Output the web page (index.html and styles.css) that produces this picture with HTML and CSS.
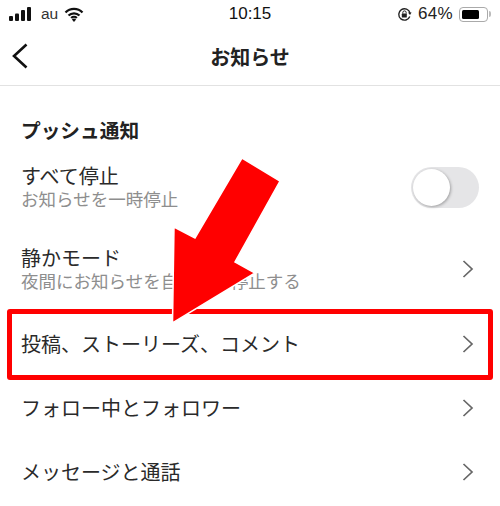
FILE: index.html
```html
<!DOCTYPE html>
<html lang="ja">
<head>
<meta charset="utf-8">
<title>お知らせ</title>
<link rel="stylesheet" href="styles.css">
</head>
<body>
<div class="screen">
  <div class="status">
    <div class="status-left">
      <svg class="signal" width="24" height="16" viewBox="0 0 24 16"><rect x="0" y="10" width="4" height="5" rx="1"/><rect x="6" y="7.5" width="4" height="7.5" rx="1"/><rect x="12" y="4" width="4" height="11" rx="1"/><rect x="18" y="1" width="4" height="14" rx="1"/></svg>
      <span class="carrier">au</span>
      <svg class="wifi" width="20" height="15" viewBox="0 0 20 15"><path d="M1.5 5.5a12 12 0 0 1 17 0M4.5 8.5a8 8 0 0 1 11 0M7.2 11a4 4 0 0 1 5.6 0" fill="none" stroke="#111" stroke-width="2.3"/><path d="M10 15l-2.1-2.4a3 3 0 0 1 4.2 0z" fill="#111"/></svg>
    </div>
    <span class="time">10:15</span>
    <div class="status-right">
      <svg class="lock" width="15" height="15" viewBox="0 0 15 15"><path d="M12.8 9.5A5.7 5.7 0 1 1 13 6" fill="none" stroke="#222" stroke-width="1.4"/><path d="M11 5.5h3.6L13 8z" fill="#222"/><rect x="4.8" y="6.6" width="5" height="4" rx=".6" fill="#222"/><path d="M5.8 6.6V5.6a1.7 1.7 0 0 1 3.4 0v1" fill="none" stroke="#222" stroke-width="1"/></svg>
      <span class="pct">64%</span>
      <div class="battery"><div class="battery-fill"></div></div>
      <div class="battery-cap"></div>
    </div>
  </div>
  <header class="nav">
    <svg class="back" width="18" height="26" viewBox="0 0 18 26"><path d="M15.5 1.5L3 13l12.5 11.5" fill="none" stroke="#111" stroke-width="2.6"/></svg>
    <h1 class="nav-title">お知らせ</h1>
  </header>
  <main class="content">
    <h2 class="section-title">プッシュ通知</h2>
    <div class="row row-toggle">
      <div class="row-text">
        <div class="row-label">すべて停止</div>
        <div class="row-sub">お知らせを一時停止</div>
      </div>
      <div class="toggle"><div class="knob"></div></div>
    </div>
    <div class="row row-double">
      <div class="row-text">
        <div class="row-label">静かモード</div>
        <div class="row-sub">夜間にお知らせを自動一時停止する</div>
      </div>
      <svg class="chev" width="12" height="20" viewBox="0 0 12 20"><path d="M1.5 2l8.5 8-8.5 8" fill="none" stroke="#666" stroke-width="1.7"/></svg>
    </div>
    <div class="row row-single row-first">
      <div class="row-label">投稿、ストーリーズ、コメント</div>
      <svg class="chev" width="12" height="20" viewBox="0 0 12 20"><path d="M1.5 2l8.5 8-8.5 8" fill="none" stroke="#666" stroke-width="1.7"/></svg>
    </div>
    <div class="row row-single">
      <div class="row-label">フォロー中とフォロワー</div>
      <svg class="chev" width="12" height="20" viewBox="0 0 12 20"><path d="M1.5 2l8.5 8-8.5 8" fill="none" stroke="#666" stroke-width="1.7"/></svg>
    </div>
    <div class="row row-single">
      <div class="row-label">メッセージと通話</div>
      <svg class="chev" width="12" height="20" viewBox="0 0 12 20"><path d="M1.5 2l8.5 8-8.5 8" fill="none" stroke="#666" stroke-width="1.7"/></svg>
    </div>
  </main>
  <div class="highlight"></div>
  <svg class="arrow" width="500" height="506" viewBox="0 0 500 506"><polygon points="242,158 280,181 235,262 255,273 172.5,323 174,227 195,238" fill="#f00" stroke="#fff" stroke-width="1.5"/></svg>
</div>
</body>
</html>
```
FILE: styles.css
```css
* { box-sizing: border-box; }
html, body { margin: 0; padding: 0; background: #fff; }
body { font-family: "Noto Sans CJK JP", "Noto Sans", sans-serif; color: #222; }
.screen { position: relative; width: 500px; height: 506px; overflow: hidden; background: #fff; }

.status { height: 28px; display: flex; align-items: center; justify-content: space-between; padding: 0 9px; position: relative; font-family: "Liberation Sans", sans-serif; }
.status-left { display: flex; align-items: center; width: 122px; }
.signal { fill: #111; margin-right: 8px; }
.carrier { font-size: 15.5px; color: #333; margin-right: 6px; }
.time { font-size: 17px; color: #111; }
.status-right { display: flex; align-items: center; width: 122px; justify-content: flex-end; }
.lock { margin-right: 6px; }
.pct { font-size: 17px; color: #222; margin-right: 6px; letter-spacing: .3px; }
.battery { width: 29px; height: 15px; border: 1.5px solid #aaa; border-radius: 4px; padding: 2px; }
.battery-fill { width: 17px; height: 100%; background: #000; border-radius: 1.5px; }
.battery-cap { width: 2px; height: 6px; background: #bbb; border-radius: 0 2px 2px 0; margin-left: 1px; }

.nav { height: 58px; display: flex; align-items: center; justify-content: center; position: relative; border-bottom: 1px solid #e2e2e2; }
.back { position: absolute; left: 11px; top: 15px; }
.nav-title { margin: 0; font-size: 20px; font-weight: 700; color: #222; }

.content { display: flex; flex-direction: column; padding: 0 22px 0 21px; }
.section-title { margin: 31px 0 0; font-size: 19.7px; line-height: 26px; font-weight: 700; color: #222; }
.row { display: flex; align-items: center; justify-content: space-between; }
.row-toggle { height: 58px; margin-top: 15px; }
.row-double { height: 64px; margin-top: 21px; padding-right: 4px; }
.row-first { margin-top: 11px; }
.row-single { height: 64px; padding-right: 4px; }
.row-label { font-size: 20px; line-height: 24px; color: #2a2a2a; white-space: nowrap; }
.row-sub { font-size: 17.5px; line-height: 22px; color: #8e8e8e; white-space: nowrap; }
.toggle { width: 68px; height: 41px; border-radius: 21px; background: #e5e5e7; padding: 2px; margin-right: -1px; }
.knob { width: 37px; height: 37px; border-radius: 50%; background: #fff; box-shadow: 1px 1px 3px rgba(0,0,0,.3); }

.highlight { position: absolute; left: 7px; top: 309px; width: 486px; height: 71px; border: 5px solid #f00; border-radius: 3px; }
.arrow { position: absolute; left: 0; top: 0; }
```
